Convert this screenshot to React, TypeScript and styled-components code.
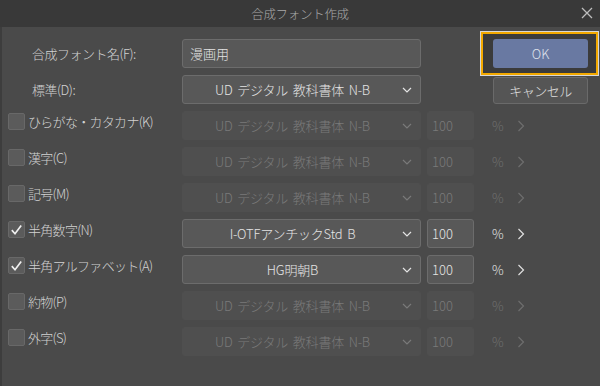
import React from "react";
import styled, { createGlobalStyle, css } from "styled-components";

const GlobalStyle = createGlobalStyle`
  html, body {
    margin: 0;
    padding: 0;
    background: #4a4a4a;
  }
  * {
    box-sizing: border-box;
  }
  body {
    font-family: "Noto Sans CJK JP", "Noto Sans", sans-serif;
    font-weight: 300;
  }
`;

type Part = {
  key: string;
  label: string;
  font: string;
  checked: boolean;
};

const parts: Part[] = [
  { key: "kana", label: "ひらがな・カタカナ(K)", font: "UD デジタル 教科書体 N-B", checked: false },
  { key: "kanji", label: "漢字(C)", font: "UD デジタル 教科書体 N-B", checked: false },
  { key: "symbol", label: "記号(M)", font: "UD デジタル 教科書体 N-B", checked: false },
  { key: "digit", label: "半角数字(N)", font: "I-OTFアンチックStd B", checked: true },
  { key: "alpha", label: "半角アルファベット(A)", font: "HG明朝B", checked: true },
  { key: "punct", label: "約物(P)", font: "UD デジタル 教科書体 N-B", checked: false },
  { key: "gaiji", label: "外字(S)", font: "UD デジタル 教科書体 N-B", checked: false },
];

function App() {
  return (
    <>
      <GlobalStyle />
      <Window>
        <TitleBar>
          <Title>合成フォント作成</Title>
          <CloseButton>
            <svg width="12" height="12" viewBox="0 0 12 12">
              <path d="M1 1 L11 11 M11 1 L1 11" stroke="#bdbdbd" strokeWidth="1.3" fill="none" />
            </svg>
          </CloseButton>
        </TitleBar>
        <Body>
          <Row>
            <Label>合成フォント名(F):</Label>
            <TextInput>漫画用</TextInput>
            <FocusFrame>
              <OkButton>OK</OkButton>
            </FocusFrame>
          </Row>
          <Row>
            <Label>標準(D):</Label>
            <Select>
              <SelectText>UD デジタル 教科書体 N-B</SelectText>
              <Chevron />
            </Select>
            <SideButton>キャンセル</SideButton>
          </Row>
          {parts.map((p) => (
            <Row key={p.key}>
              <CheckLabel>
                <CheckBox>
                  {p.checked && (
                    <svg width="16" height="16" viewBox="0 0 16 16">
                      <path d="M3 8.2 L6.4 12 L13 3.2" stroke="#f0f0f0" strokeWidth="1.8" fill="none" />
                    </svg>
                  )}
                </CheckBox>
                <CheckText>{p.label}</CheckText>
              </CheckLabel>
              <Select $disabled={!p.checked}>
                <SelectText>{p.font}</SelectText>
                <Chevron />
              </Select>
              <NumberBox $disabled={!p.checked}>100</NumberBox>
              <Percent $disabled={!p.checked}>%</Percent>
              <Arrow $disabled={!p.checked}>
                <svg width="8" height="12" viewBox="0 0 8 12">
                  <path d="M1.5 1 L6.5 6 L1.5 11" stroke="currentColor" strokeWidth="1.2" fill="none" />
                </svg>
              </Arrow>
            </Row>
          ))}
        </Body>
      </Window>
    </>
  );
}

function Chevron() {
  return (
    <ChevronIcon width="10" height="6" viewBox="0 0 10 6">
      <path d="M1 1 L5 5 L9 1" stroke="currentColor" strokeWidth="1.2" fill="none" />
    </ChevronIcon>
  );
}

export default App;

const Window = styled.div`
  width: 600px;
  height: 386px;
  display: flex;
  flex-direction: column;
  background: #4a4a4a;
  overflow: hidden;
`;

const TitleBar = styled.div`
  height: 27px;
  flex-shrink: 0;
  background: #393939;
  display: flex;
  align-items: center;
  justify-content: center;
  position: relative;
`;

const Title = styled.div`
  font-size: 12.5px;
  color: #a9a9a9;
  letter-spacing: -0.3px;
`;

const CloseButton = styled.div`
  position: absolute;
  right: 7px;
  top: 7px;
  width: 12px;
  height: 12px;
  display: flex;
`;

const Body = styled.div`
  flex: 1;
  border-left: 2px solid #3d3d3d;
  padding: 12px 0 0 6px;
  display: flex;
  flex-direction: column;
  gap: 7px;
`;

const Row = styled.div`
  display: flex;
  align-items: center;
  height: 29px;
`;

const Label = styled.div`
  width: 174px;
  flex-shrink: 0;
  padding-left: 24px;
  font-size: 13px;
  color: #d2d2d2;
  letter-spacing: -0.5px;
`;

const CheckLabel = styled.div`
  width: 174px;
  flex-shrink: 0;
  align-self: flex-start;
  margin-top: 1px;
  display: flex;
  align-items: center;
  gap: 3px;
`;

const CheckBox = styled.div`
  width: 17px;
  height: 17px;
  border-radius: 2px;
  background: #5b5b5b;
  border: 1px solid #686868;
  display: flex;
  align-items: center;
  justify-content: center;
`;

const CheckText = styled.span`
  font-size: 13px;
  color: #d2d2d2;
  letter-spacing: -0.7px;
  white-space: nowrap;
`;

const fieldBase = css<{ $disabled?: boolean }>`
  height: 29px;
  border-radius: 3px;
  font-size: 13px;
  display: flex;
  align-items: center;
  ${(p) =>
    p.$disabled
      ? css`
          background: #4f4f4f;
          border: 1px solid #4f4f4f;
          color: #7a7a7a;
        `
      : css`
          background: #585858;
          border: 1px solid #6c6c6c;
          color: #e4e4e4;
        `}
`;

const TextInput = styled.div`
  ${fieldBase};
  width: 239px;
  padding-left: 7px;
`;

const Select = styled.div<{ $disabled?: boolean }>`
  ${fieldBase};
  width: 239px;
  padding: 0 8px 0 0;
`;

const SelectText = styled.span`
  flex: 1;
  text-align: center;
  white-space: nowrap;
  word-spacing: 2px;
  letter-spacing: -0.2px;
`;

const ChevronIcon = styled.svg`
  flex-shrink: 0;
  color: inherit;
`;

const NumberBox = styled.div<{ $disabled?: boolean }>`
  ${fieldBase};
  width: 47px;
  margin-left: 6px;
  padding-left: 4px;
`;

const Percent = styled.span<{ $disabled?: boolean }>`
  margin-left: 18px;
  font-size: 13px;
  color: ${(p) => (p.$disabled ? "#6e6e6e" : "#e0e0e0")};
`;

const Arrow = styled.span<{ $disabled?: boolean }>`
  margin-left: 13px;
  display: flex;
  color: ${(p) => (p.$disabled ? "#6e6e6e" : "#e0e0e0")};
`;

const FocusFrame = styled.div`
  position: relative;
  margin-left: 72px;
  display: flex;

  &::before {
    content: "";
    position: absolute;
    top: -7px;
    bottom: -7px;
    left: -12px;
    right: -10px;
    background: #3b3b3b;
    border: 2px solid #f3a900;
    box-shadow: 0 0 0 1px #d8d8d8;
  }
`;

const OkButton = styled.div`
  position: relative;
  width: 95px;
  height: 29px;
  border-radius: 3px;
  background: #6979a2;
  color: #dfe3ec;
  font-size: 13px;
  display: flex;
  align-items: center;
  justify-content: center;
`;

const SideButton = styled.div`
  margin-left: 72px;
  width: 95px;
  height: 27px;
  margin-top: 2px;
  border-radius: 3px;
  background: #555555;
  border: 1px solid #6a6a6a;
  color: #e0e0e0;
  font-size: 13px;
  letter-spacing: -0.5px;
  display: flex;
  align-items: center;
  justify-content: center;
`;
